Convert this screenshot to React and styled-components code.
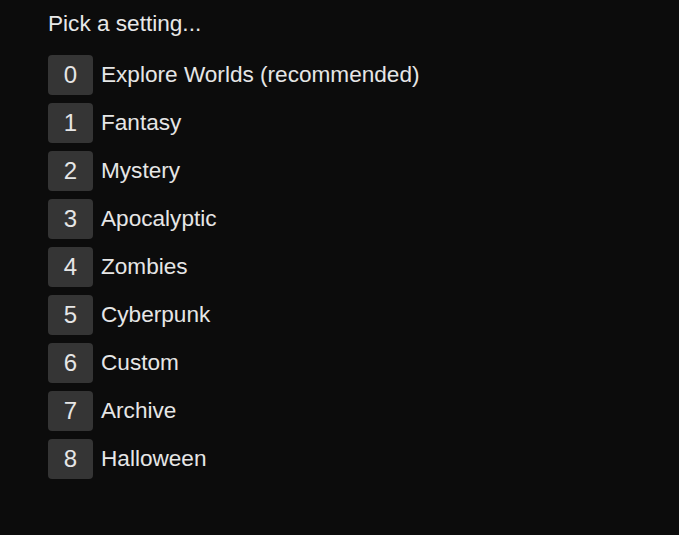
import styled, { createGlobalStyle } from "styled-components";

const GlobalStyle = createGlobalStyle`
  html, body {
    margin: 0;
    background: #0c0c0c;
    height: 100%;
  }
  body {
    font-family: "Liberation Sans", Arial, sans-serif;
    color: #e6e6e6;
  }
`;

const settings = [
  "Explore Worlds (recommended)",
  "Fantasy",
  "Mystery",
  "Apocalyptic",
  "Zombies",
  "Cyberpunk",
  "Custom",
  "Archive",
  "Halloween",
];

const App = () => {
  return (
    <>
      <GlobalStyle />
      <Container>
        <Prompt>Pick a setting...</Prompt>
        <List>
          {settings.map((name, i) => (
            <Option key={name}>
              <Key>{i}</Key>
              <Label>{name}</Label>
            </Option>
          ))}
        </List>
      </Container>
    </>
  );
};

const Container = styled.div`
  padding: 11px 48px;
  display: flex;
  flex-direction: column;
  gap: 18px;
`;

const Prompt = styled.div`
  font-size: 22.6px;
  line-height: 26px;
  color: #e8e8e8;
`;

const List = styled.div`
  display: flex;
  flex-direction: column;
  gap: 8px;
`;

const Option = styled.div`
  display: flex;
  align-items: center;
  gap: 8px;
  cursor: pointer;
`;

const Key = styled.div`
  width: 45px;
  height: 40px;
  border-radius: 4px;
  background: #353535;
  display: flex;
  align-items: center;
  justify-content: center;
  font-size: 24px;
  color: #e6e6e6;
`;

const Label = styled.div`
  font-size: 22.6px;
  line-height: 26px;
  margin-top: -1px;
  color: #e6e6e6;
`;

export default App;
